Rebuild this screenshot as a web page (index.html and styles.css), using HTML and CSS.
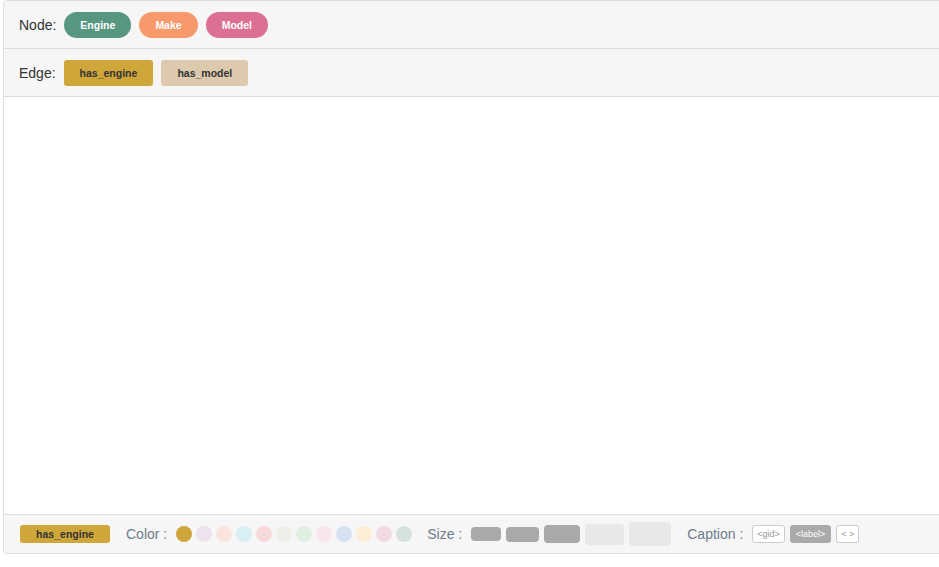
FILE: index.html
```html
<!doctype html>
<html lang="en">
<head>
    <meta charset="utf-8">
    <title>Graph</title>
    <link rel="stylesheet" href="styles.css">
</head>
<body>
    <div class="graph">
        <div class="legend">
            <span class="legend-label">Node:</span>
            <span class="node-pill engine">Engine</span>
            <span class="node-pill make">Make</span>
            <span class="node-pill model">Model</span>
        </div>
        <div class="legend">
            <span class="legend-label">Edge:</span>
            <span class="edge-chip has-engine">has_engine</span>
            <span class="edge-chip has-model">has_model</span>
        </div>

        <div class="canvas"></div>

        <div class="style-bar">
            <span class="edge-chip small has-engine">has_engine</span>

            <span class="bar-label">Color :</span>
            <div class="swatches">
                <span class="swatch" style="background:#cfa63a"></span>
                <span class="swatch" style="background:#efe2ef"></span>
                <span class="swatch" style="background:#fae5dc"></span>
                <span class="swatch" style="background:#d8eff4"></span>
                <span class="swatch" style="background:#f7d8db"></span>
                <span class="swatch" style="background:#f0eee9"></span>
                <span class="swatch" style="background:#dfefe1"></span>
                <span class="swatch" style="background:#f7e7ed"></span>
                <span class="swatch" style="background:#d5e2f2"></span>
                <span class="swatch" style="background:#fbeed6"></span>
                <span class="swatch" style="background:#f1dae3"></span>
                <span class="swatch" style="background:#d6e2de"></span>
            </div>

            <span class="bar-label">Size :</span>
            <div class="sizes">
                <span class="size s1"></span>
                <span class="size s2"></span>
                <span class="size s3"></span>
                <span class="size s4"></span>
                <span class="size s5"></span>
            </div>

            <span class="bar-label">Caption :</span>
            <div class="captions">
                <span class="caption">&lt;gid&gt;</span>
                <span class="caption active">&lt;label&gt;</span>
                <span class="caption">&lt; &gt;</span>
            </div>
        </div>
    </div>
</body>
</html>
```

FILE: styles.css
```css
* {
  box-sizing: border-box;
}

body {
  margin: 0;
  overflow: hidden;
  background: #fff;
  font-family: 'Liberation Sans', Arial, sans-serif;
}

.graph {
  margin-left: 3px;
  width: 945px;
  border: 1px solid #ddd;
  border-radius: 4px;
  overflow: hidden;
}

.legend {
  height: 48px;
  display: flex;
  align-items: center;
  gap: 8px;
  padding-left: 15px;
  padding-top: 1px;
  background: #f6f6f6;
  border-bottom: 1px solid #ddd;
}

.legend-label {
  font-size: 14px;
  color: #333;
}

.node-pill {
  height: 26px;
  line-height: 26px;
  padding: 0 16px;
  border-radius: 13px;
  color: #fff;
  font-size: 10.5px;
  font-weight: bold;
}

.engine { background: #57967f; }
.make { background: #f8996b; }
.model { background: #dd6f92; }

.edge-chip {
  height: 26px;
  line-height: 26px;
  padding: 0 16px;
  border-radius: 3px;
  color: #333;
  font-size: 10.5px;
  font-weight: bold;
}

.has-engine { background: #cfa63a; }
.has-model { background: #dcc9ae; }

.edge-chip.small {
  height: 18px;
  line-height: 18px;
  width: 90px;
  text-align: center;
  padding: 0;
  margin-right: 16px;
}

.canvas {
  height: 418px;
  background: #fff;
  border-bottom: 1px solid #ddd;
}

.style-bar {
  height: 38px;
  display: flex;
  align-items: center;
  padding-left: 16px;
  background: #f6f6f6;
}

.bar-label {
  font-size: 14px;
  color: #6f7c8a;
  margin-right: 9px;
}

.swatches {
  display: flex;
  gap: 4px;
  margin-right: 15px;
}

.swatch {
  width: 16px;
  height: 16px;
  border-radius: 50%;
}

.sizes {
  display: flex;
  align-items: center;
  gap: 5px;
  margin-right: 16px;
}

.size {
  border-radius: 4px;
  background: #a9a9a9;
}

.s1 { width: 30px; height: 14px; }
.s2 { width: 33px; height: 15px; }
.s3 { width: 36px; height: 18px; }
.s4 { width: 39px; height: 21px; background: #e8e8e8; }
.s5 { width: 42px; height: 24px; background: #e8e8e8; }

.captions {
  display: flex;
  gap: 5px;
}

.caption {
  height: 18px;
  line-height: 16px;
  padding: 0 4px;
  font-size: 9px;
  color: #999;
  background: #fff;
  border: 1px solid #ccc;
  border-radius: 3px;
}

.caption.active {
  padding: 0 5px;
  background: #aaa;
  border-color: #aaa;
  color: #fff;
}
```
